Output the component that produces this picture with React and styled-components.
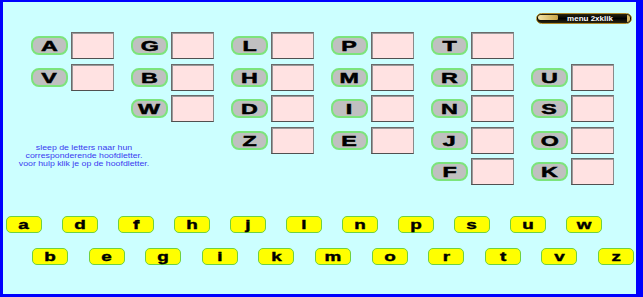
import styled, { createGlobalStyle } from "styled-components";

const GlobalStyle = createGlobalStyle`
  html, body {
    margin: 0;
    padding: 0;
    background: #0000fe;
    overflow: hidden;
  }
  body {
    font-family: "Liberation Sans", Arial, sans-serif;
  }
`;

const Panel = styled.main`
  box-sizing: border-box;
  height: 292px;
  margin: 2px 7px 3px 3px;
  background: #ccffff;
  overflow: hidden;
`;

const Header = styled.div`
  display: flex;
  justify-content: flex-end;
  padding: 11px 4px 0 0;
  height: 11px;
`;

const MenuButton = styled.button`
  position: relative;
  box-sizing: border-box;
  width: 96px;
  height: 11px;
  padding: 0 0 0 12px;
  border: 1px solid #b08a2a;
  border-radius: 6px;
  background: linear-gradient(to bottom, #2a2410, #000 50%, #2a2410);
  color: #fff;
  font-family: "Liberation Sans", Arial, sans-serif;
  font-size: 8px;
  font-weight: bold;
  line-height: 9px;
  text-align: center;
  cursor: pointer;

  &::before {
    content: "";
    position: absolute;
    left: 1px;
    top: 1px;
    width: 20px;
    height: 5px;
    border-radius: 4px 2px 2px 4px;
    background: linear-gradient(to right, #f3e4a8, #c9a445);
  }

  &::after {
    content: "";
    position: absolute;
    right: 1px;
    top: 1px;
    width: 3px;
    height: 7px;
    border-radius: 0 4px 4px 0;
    background: #d7b864;
  }
`;

const Board = styled.div`
  display: grid;
  grid-template-columns: repeat(6, 83px);
  grid-template-rows: repeat(5, 27px);
  column-gap: 17px;
  row-gap: 4.5px;
  margin: 8px 0 0 28px;
`;

const Slot = styled.div`
  grid-column: ${(p) => p.$col};
  grid-row: ${(p) => p.$row};
  display: flex;
  align-items: center;
  gap: 3px;
`;

const Capital = styled.span`
  box-sizing: border-box;
  width: 37px;
  height: 19px;
  display: flex;
  align-items: center;
  justify-content: center;
  background: #c0c0c0;
  border: 2px solid #7ce47c;
  border-radius: 8px;
  color: #000;
  font-size: 15px;
  font-weight: bold;
  -webkit-text-stroke: 0.5px #000;

  span {
    display: inline-block;
    transform: scaleX(1.55);
  }
`;

const DropBox = styled.span`
  box-sizing: border-box;
  width: 43px;
  height: 27px;
  background: #ffe2e2;
  border: 1px solid #6a6a6a;
  border-right-color: #8a8a8a;
  border-bottom-color: #505050;
  box-shadow: inset 1px 1px 0 #9a9a9a;
`;

const Hint = styled.p`
  grid-column: 1 / 3;
  grid-row: 4 / 6;
  align-self: center;
  justify-self: start;
  width: 134px;
  margin: 0 0 0 -14px;
  color: #3a3af0;
  font-size: 7px;
  line-height: 7.7px;
  text-align: center;
  transform: scaleX(1.25);
`;

const KeyRow = styled.div`
  display: flex;
  gap: ${(p) => p.$gap}px;
  padding-left: ${(p) => p.$indent}px;
  margin-top: ${(p) => p.$top}px;
`;

const Key = styled.span`
  box-sizing: border-box;
  width: 36px;
  height: 17px;
  display: flex;
  align-items: center;
  justify-content: center;
  background: #ffff00;
  border: 1.5px solid #6fd13f;
  border-radius: 5px;
  color: #000;
  font-size: 13px;
  font-weight: bold;
  -webkit-text-stroke: 0.4px #000;

  span {
    display: inline-block;
    transform: scaleX(1.45);
  }
`;

const capitals = [
  ["A", 1, 1], ["V", 1, 2],
  ["G", 2, 1], ["B", 2, 2], ["W", 2, 3],
  ["L", 3, 1], ["H", 3, 2], ["D", 3, 3], ["Z", 3, 4],
  ["P", 4, 1], ["M", 4, 2], ["I", 4, 3], ["E", 4, 4],
  ["T", 5, 1], ["R", 5, 2], ["N", 5, 3], ["J", 5, 4], ["F", 5, 5],
  ["U", 6, 2], ["S", 6, 3], ["O", 6, 4], ["K", 6, 5],
];

const topKeys = ["a", "d", "f", "h", "j", "l", "n", "p", "s", "u", "w"];
const bottomKeys = ["b", "e", "g", "i", "k", "m", "o", "r", "t", "v", "z"];

const App = () => {
  return (
    <>
      <GlobalStyle />
      <Panel>
        <Header>
          <MenuButton>menu 2xklik</MenuButton>
        </Header>
        <Board>
          {capitals.map(([letter, col, row]) => (
            <Slot key={letter} $col={col} $row={row}>
              <Capital>
                <span>{letter}</span>
              </Capital>
              <DropBox />
            </Slot>
          ))}
          <Hint>
            sleep de letters naar hun
            <br />
            corresponderende hoofdletter.
            <br />
            voor hulp klik je op de hoofdletter.
          </Hint>
        </Board>
        <KeyRow $indent={3} $gap={20} $top={31}>
          {topKeys.map((k) => (
            <Key key={k}>
              <span>{k}</span>
            </Key>
          ))}
        </KeyRow>
        <KeyRow $indent={29} $gap={20.6} $top={15}>
          {bottomKeys.map((k) => (
            <Key key={k}>
              <span>{k}</span>
            </Key>
          ))}
        </KeyRow>
      </Panel>
    </>
  );
};

export default App;
